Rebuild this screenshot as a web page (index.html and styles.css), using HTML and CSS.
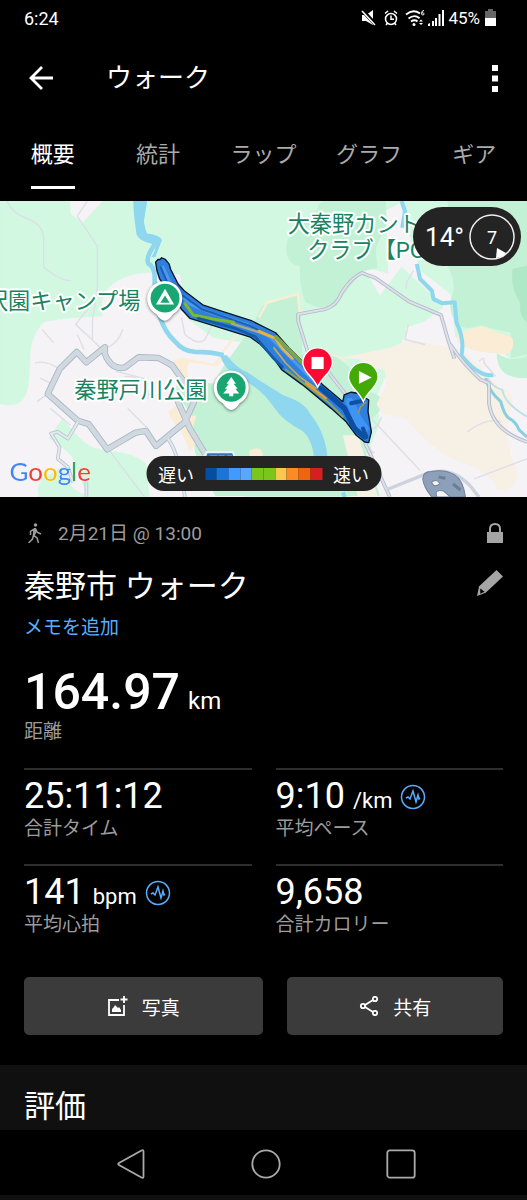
FILE: index.html
```html
<!DOCTYPE html>
<html lang="ja">
<head>
    <meta charset="UTF-8">
    <meta name="viewport" content="width=device-width, initial-scale=1.0">
    <title>ウォーク</title>
    <link rel="stylesheet" href="styles.css">
</head>
<body>
    <!-- Status bar -->
    <div class="status-bar">
        <span>6:24</span>
        <div class="status-icons">
            <svg width="16" height="18" viewBox="0 0 16 18">
                <path d="M1 6h4l7-5v15L5 12H1z" fill="#fff"/>
                <path d="M1 1l14 15" stroke="#000" stroke-width="4"/>
                <path d="M1 2l13 14" stroke="#fff" stroke-width="1.5"/>
            </svg>
            <svg class="alarm" width="16" height="18" viewBox="0 0 16 18" fill="none" stroke="#fff" stroke-width="1.5">
                <circle cx="8" cy="10" r="5.5"/>
                <path d="M8 6.500v3.800h3M2 4.500l3-2.500M14 4.500l-3-2.500M4.500 14l-1.500 2M11.500 14l1.500 2"/>
            </svg>
            <svg class="wifi" width="20" height="18" viewBox="0 0 20 18" fill="none" stroke="#fff" stroke-width="1.800">
                <path d="M1 5.500q7-6 14-1M3.500 9.500q6-4.500 11-.3M6 12.500q3.500-2.500 6.500 0"/>
                <circle cx="9" cy="15.500" r="1.500" fill="#fff" stroke="none"/>
                <path d="M19 1.500q-2.500 0-2.500 3 0 1.500 1.300 1.500T19 4.700 16.700 4" stroke-width="1"/>
                <path d="M14 12.500l2-2 2 2zM14 14l2 2 2-2z" fill="#fff" stroke="none"/>
            </svg>
            <svg width="17" height="18" viewBox="0 0 17 18" fill="#fff">
                <path d="M0 17v-2l2-1v3zM4 17v-5h2v5zM7 17V9h2v8zM10.500 17V5h2v12zM14 17V1h2v16z"/>
            </svg>
            <span>45%</span>
            <svg class="battery" width="11" height="18" viewBox="0 0 11 18">
                <path d="M0 2h3V0h5v2h3v7H0z" fill="#666"/>
                <path d="M0 9h11v8H0z" fill="#fff"/>
            </svg>
        </div>
    </div>

    <!-- App bar -->
    <header class="app-bar">
        <button class="icon-button" aria-label="戻る">
            <svg width="24" height="24" viewBox="0 0 24 24" fill="none" stroke="#fff" stroke-width="2.800">
                <path d="M24 12H2M13 1L2 12l11 11"/>
            </svg>
        </button>
        <h1>ウォーク</h1>
        <button class="icon-button" aria-label="メニュー">
            <svg width="6" height="27" viewBox="0 0 6 27" fill="#fff">
                <path d="M0 0h6v6H0zM0 10.500h6v6H0zM0 21h6v6H0z"/>
            </svg>
        </button>
    </header>

    <nav class="tabs">
        <a class="tab active" href="#">概要</a>
        <a class="tab" href="#">統計</a>
        <a class="tab" href="#">ラップ</a>
        <a class="tab" href="#">グラフ</a>
        <a class="tab" href="#">ギア</a>
    </nav>

    <!-- Map -->
    <div class="map">
        <svg class="map-canvas" viewBox="0 3 1568 881">
            <rect y="3" width="1568" height="881" fill="#d3f8e2"/>

            <!-- Built-up areas -->
            <g fill="#f5f3f5">
                <path d="M208 3h98l-60 64-35-25z"/>
                <path d="M0 607q60 15 78-30 10-20 12-110 0-60 40-103 40-12 175-18-10-35 10-75 40-50 130-55l90 5 20 130 80 60 130 20-20 80-10 60-120-15q-20 20 0 50 60 60 40 200l70 60 10 80-45 41H440q-10-90-30-125-60-30-140 15-70 0-75-90l-65 40-40 60-90-120z"/>
                <path d="M0 740q60 20 110 90l5 54H0z"/>
                <path d="M1150 30l40-20 60 200 90 70 15 130 70-10 143 110v374H1040l90-220-10-80 85-180 115-85-60-60-65-60-65 85-50-85 75 20z"/>
            </g>

            <!-- Woods -->
            <g fill="#c3f1d5">
                <path d="M965 3q-20 5-20 25l-90 90q-15 70 38 80-5 50 15 105 40 25 90 15l75-105 50-10-5-60 30-65V3z"/>
                <path d="M1332 190V3h236v457l-48 10 0-75q-70-15-90-22-50 20-75-10-25-40-10-80 15-30-15-93z"/>
                <path d="M1478 455q40 30 90 10v65q-90 5-90-75z"/>
                <path d="M782 315l100-35 13 60 5 120 100 5q80 60 70 100 70 10 70 40-10 30-35 45l-5 60-15 30 45 141H640l-60-130-10-110-50-75q10-20 5-30l110 10 35-60 60-80z"/>
                <path d="M185 650l40 45q40 50 100 50 80 10 110 40l10 99H260l-45-120q-40-40-70-55z" fill="#d3f8e2"/>
            </g>
            <path d="M1525 205l43-10v170q-25-20-20-60-30-40-23-100z" fill="#afe8c7"/>
            <path d="M1205 380l110-35 20 65 35 10-20 30-130-20z" fill="#f5f3f5"/>

            <!-- Fields -->
            <path d="M1010 470l150-30 60-22 150 25q80 70 110 110 60 25 40 60l-10 70q0 70 30 120 5 60-60 60-20-60-130-90-80-45-145-125l-65-10-20-30 30-60-5-40-60-20-15-15z" fill="#f6f0e5"/>
            <path d="M1365 395l65-20 95 35q10 60-45 45-80 0-120-35z" fill="#faecd5"/>
            <path d="M1020 700l45 0 60 184h-60z" fill="#f6f0e5"/>
            <g fill="#faecd5">
                <path d="M515 480q20-15 45-8l75 15 25-28 12 8-28 28-80-12q-20 30 5 55l-20 20z"/>
                <path d="M500 630l30-22 20 42 35-10-10 35 10 45-20 28-25-60-20-20z"/>
                <path d="M742 745q35-15 40 10l-5 20h-35z"/>
            </g>
            <path d="M660 455l60-75M770 350l25-45 92-25 5 60M890 330l12 10" fill="none" stroke="#faecd5" stroke-width="7"/>
            <path d="M955 455q50 5 75 25" fill="none" stroke="#faecd5" stroke-width="6"/>

            <!-- Water -->
            <g fill="none" stroke="#8fd7ef" stroke-linejoin="round">
                <path d="M470 120q-40 50-28 70 20 10 18 45 0 130 60 185 25 30 60 32 50 0 85 10" stroke-width="14"/>
                <path d="M1195 3l10 30-8 50M1240 190l10 45 35 35 5 25 25 12 38-3 5 60q25 50 15 100 35 40 50 45 20 15 45 12" stroke-width="12"/>
                <path d="M1445 530q10 40 45 70 10 40 25 50 20 10 30 35l23 20" stroke="#86cfe0" stroke-width="9"/>
                <path d="M1450 530q20 30 45 35 5 40 73 80" stroke="#b9dfe8" stroke-width="5"/>
                <path d="M1020 870l6 14" stroke-width="12"/>
            </g>
            <g fill="#8fd7ef">
                <path d="M396 3h42l-10 60q5 30 10 37 40 5 44 20l-20 50h-12q20-30 6-38-45-10-50-30-8-50-10-99z"/>
                <path d="M655 462h20q30 40 60 50 60 40 110 70 60 20 75 50 50 60 55 140h-40q-5-60-35-85-60-30-85-70-40-60-100-85-50-30-60-70z"/>
            </g>

            <!-- Small roads -->
            <g fill="none" stroke="#dcdfe6" stroke-width="4">
                <path d="M20 3q20 40 60 52 50 20 50 60v85q50 40 80 40M260 3l-30 45 60 90v120l-15 100 0 60M265 320l-40 50 80 75M365 385q-10 40-55 60M160 425l-35-40M250 445l-20-45M540 350l10 50q40 35 60 15l20-40"/>
                <path d="M105 485q30-10 75 20M110 600l35-25M120 530l40 20M345 510l80 20 20 50M370 525q80 0 70 65M150 620l60 50M380 620l60 60M325 745l105 139"/>
                <path d="M1230 210l-20 35-2 20M1215 370l-10 45 60 15M1100 645l150 160M1060 680q60 20 75-35M1390 690q60-45 100-30M1425 480q20-20 15 5l35 40M1410 830l158-60M1100 735l10 20M1095 750h20"/>
            </g>

            <!-- Main roads -->
            <g fill="none" stroke-linejoin="round">
                <path d="M228 452l-50 50-36 75 90 80 32 10 55 75 85-50 30-5 30 45 85-70 28-60-25-55-40-55-40-22-60-2-40 30q-40 10-60-40v-20l-55 45zM525 590l40 90 45 75" stroke="#a9b6c5" stroke-width="19"/>
                <path d="M228 452l-50 50-36 75 90 80 32 10 55 75 85-50 30-5 30 45 85-70 28-60-25-55-40-55-40-22-60-2-40 30q-40 10-60-40v-20l-55 45zM525 590l40 90 45 75" stroke="#d0d8e0" stroke-width="14"/>
                <path d="M232 660l-30 50-30-20-20 5 25 40-5 35 30 25q10 30 15 45M257 840v44M500 710q35 50 50 174" stroke="#b9c5d0" stroke-width="11"/>
                <path d="M232 660l-30 50-30-20-20 5 25 40-5 35 30 25q10 30 15 45M257 840v44M500 710q35 50 50 174" stroke="#e3e9ef" stroke-width="6"/>
                <path d="M1030 580l-55-70-60-60-28-90 0-20 80-15q35-10 50-50 30-45 60-58l40 15 100 70 95 40 20 70 20 60M1340 430q40 60 90 105l25 10v60q10 80 113 115M1085 720l75 164" stroke="#b3b9ca" stroke-width="11"/>
                <path d="M1030 580l-55-70-60-60-28-90 0-20 80-15q35-10 50-50 30-45 60-58l40 15 100 70 95 40 20 70 20 60M1340 430q40 60 90 105l25 10v60q10 80 113 115M1085 720l75 164" stroke="#dde0e8" stroke-width="6"/>
                <path d="M1150 862l125-50q70-20 125 40l25 32" stroke="#cbd3dc" stroke-width="10"/>
            </g>

            <!-- Circuit course -->
            <path d="M1258 830q0-22 25-22 40-8 70 10 25 15 32 66h-100q-25-30-27-54z" fill="#8da0b9" stroke="#70829e" stroke-width="3"/>
            <path d="M1284 840q15-12 25 4-12 10-20 4zM1300 884q-10-25 20-18l20 18z" fill="#f5f3f5" stroke="#70829e" stroke-width="3"/>
            <path d="M1305 824l20 4M1348 845l22 18" stroke="#6b7d99" stroke-width="9"/>

            <!-- Route shield -->
            <path d="M615 750h78l10 24-20 70h-60l-18-70z" fill="#3974b8" stroke="#e8f1ff" stroke-width="7"/>
            <path d="M625 764h15l-8 10M650 764h15v10M676 764h15" fill="none" stroke="#fff" stroke-width="6"/>

            <!-- Recorded track -->
            <path d="M463 185l7-8 6 0 5-5 11 5 11 13 5 17 22 43 18 20 57 43 45 15 100 32 70 35 40 45 45 45 55 65 60 50 4-20 21-8 20 3 32 20-2 35 10 60-8 32-12-2-25-20-30-40-45-40-85-70-62-45-28-40-35-35-30-22-105-33-75-23-25-27-65-90-8-25z" fill="#2f7fdc" stroke="#07152a" stroke-width="4" stroke-linejoin="round"/>
            <g fill="none" stroke-linecap="round" stroke-linejoin="round">
                <path d="M485 200l30 65 50 45 60 25 110 35 70 40 60 60 80 80 90 80 50 70" stroke="#4c99ee" stroke-width="9"/>
                <path d="M478 200l17 40M545 285l55 40 140 48 80 40" stroke="#1c5fb4" stroke-width="6"/>
                <path d="M550 308l25 34 60 12 60 10" stroke="#7fb82d" stroke-width="9"/>
                <path d="M590 352l110 30 60 25 50 60 30 30" stroke="#125aa6" stroke-width="8"/>
                <path d="M690 368l70 22 50 17" stroke="#a9a987" stroke-width="7"/>
                <path d="M770 390l50 22 20 30 30 30" stroke="#edb43c" stroke-width="8"/>
                <path d="M822 408l40 40 40 40" stroke="#79a64f" stroke-width="12"/>
                <path d="M815 440l35 45 40 40 50 35" stroke="#c4a760" stroke-width="5"/>
                <path d="M850 505l60 45 70 55 40 40" stroke="#8aa54f" stroke-width="6"/>
                <path d="M910 545l60 45" stroke="#ef9d34" stroke-width="6"/>
                <path d="M955 560l70 60 30 60 30 25" stroke="#0c4fa2" stroke-width="16"/>
                <path d="M1040 600l25 50 20 30" stroke="#3d94f3" stroke-width="24"/>
                <path d="M1045 605l35-8M1080 680l10 25" stroke="#0f4fa4" stroke-width="12"/>
                <path d="M1067 632l5-15 16-15" stroke="#a9914c" stroke-width="5"/>
            </g>

            <!-- Place names -->
            <g class="place-label">
                <text x="-42" y="325">沢園キャンプ場</text>
                <text x="221" y="589">秦野戸川公園</text>
                <text x="856" y="94">大秦野カント</text>
                <text x="914" y="172">クラブ【PG</text>
            </g>
            <text class="google" x="28" y="837"><tspan fill="#4285f4">G</tspan><tspan fill="#ea4335">o</tspan><tspan fill="#fbbc05">o</tspan><tspan fill="#4285f4">g</tspan><tspan fill="#34a853">l</tspan><tspan fill="#ea4335">e</tspan></text>

            <!-- Place pins -->
            <g class="pin-shadow">
                <path d="M490 359q-12 0-25-20a52 52 0 1 1 50 0q-13 20-25 20z" fill="#fff"/>
                <circle cx="491" cy="292" r="43" fill="#18a673"/>
                <path d="M491 264l-27 47h54zM491 284l14 22h-28z" fill="#fff" fill-rule="evenodd"/>
                <path d="M688 625q-12 0-25-20a52 52 0 1 1 50 0q-13 20-25 20z" fill="#fff"/>
                <circle cx="688" cy="557" r="43" fill="#18a673"/>
                <path d="M688 527l-14 20h7l-12 15h7l-12 14h18v8h12v-8h18l-12-14h7l-12-15h7z" fill="#fff"/>
            </g>

            <!-- Start and stop pins -->
            <path d="M945 557q-8-18-28-39-16-20-16-34a44 44 0 0 1 88 0q0 14-16 34-20 21-28 39z" fill="#fa0b34" stroke="#fff" stroke-width="4"/>
            <path d="M927 467h36v36h-36z" fill="#fff"/>
            <path d="M1081 600q-8-18-28-39-16-20-16-34a44 44 0 0 1 88 0q0 14-16 34-20 21-28 39z" fill="#43aa05" stroke="#fff" stroke-width="4"/>
            <path d="M1068 509v38l38-19z" fill="#fff"/>
        </svg>

        <div class="weather">
            <span>14°</span>
            <svg width="46" height="46" viewBox="0 0 46 46">
                <circle cx="23" cy="23" r="22" fill="none" stroke="#eee" stroke-width="1.500"/>
                <path d="M28 34l9 5q-3 4-10 5z" fill="#fff"/>
                <text class="wind" x="23" y="30" text-anchor="middle">7</text>
            </svg>
        </div>

        <div class="legend">
            <span>遅い</span>
            <div class="scale">
                <i class="c1"></i><i class="c2"></i><i class="c3"></i><i class="c4"></i><i class="c5"></i><i class="c5"></i><i class="c6"></i><i class="c7"></i><i class="c8"></i><i class="c9"></i>
            </div>
            <span>速い</span>
        </div>
    </div>

    <!-- Activity summary -->
    <main class="summary">
        <div class="row date-row">
            <svg width="14" height="20" viewBox="0 0 14 20" fill="none" stroke="#9c9c9c" stroke-width="1.500">
                <circle cx="7.500" cy="2" r="1.800" fill="#9c9c9c" stroke="none"/>
                <path d="M6.500 5.500L5.500 12l3.500 3 1.500 5M5.500 12l-1 4-4 4M6 6L2.500 8.500V12M7.500 6l2 3.500 3.500 1.500"/>
                <path d="M6 5h2l1 3-2 4-2 .5z" fill="#9c9c9c" stroke="none"/>
            </svg>
            <span class="date">2月21日 @ 13:00</span>
            <svg class="lock" width="16" height="20" viewBox="0 0 16 20">
                <path d="M3 10V6q0-5 5-5t5 5v4" fill="none" stroke="#a5a5a5" stroke-width="2"/>
                <path d="M0 9h16v11H0z" fill="#a5a5a5"/>
            </svg>
        </div>
        <div class="row title-row">
            <h2>秦野市 ウォーク</h2>
            <button class="icon-button" aria-label="名前を編集">
                <svg width="26" height="26" viewBox="0 0 24 24">
                    <path d="M18 0l6 6L8 21l-8 3 2-9z" fill="#a5a5a5"/>
                    <path d="M3 17l4 3-4 2z" fill="#000"/>
                </svg>
            </button>
        </div>
        <a class="memo" href="#">メモを追加</a>

        <div class="distance">
            <div class="value"><strong>164.97</strong> <span class="unit">km</span></div>
            <div class="label">距離</div>
        </div>

        <div class="stats">
            <div class="stat">
                <div class="value">25:11:12</div>
                <div class="label">合計タイム</div>
            </div>
            <div class="stat">
                <div class="value">9:10 <span class="unit">/km</span>
                    <svg class="pulse" width="26" height="26" viewBox="0 0 26 26">
                        <circle cx="13" cy="13" r="11.500"/>
                        <path d="M6 14l2-1 2 2 3-8 3 11 2-7 1 4 1-1"/>
                    </svg>
                </div>
                <div class="label">平均ペース</div>
            </div>
            <div class="stat">
                <div class="value">141 <span class="unit">bpm</span>
                    <svg class="pulse" width="26" height="26" viewBox="0 0 26 26">
                        <circle cx="13" cy="13" r="11.500"/>
                        <path d="M6 14l2-1 2 2 3-8 3 11 2-7 1 4 1-1"/>
                    </svg>
                </div>
                <div class="label">平均心拍</div>
            </div>
            <div class="stat">
                <div class="value">9,658</div>
                <div class="label">合計カロリー</div>
            </div>
        </div>

        <div class="actions">
            <button class="action">
                <svg width="20" height="20" viewBox="0 0 20 20" fill="none" stroke="#fff" stroke-width="1.800">
                    <path d="M11 4H1v15h15V9M16 0v7M12.500 3.500h7"/>
                    <path d="M4 16v-3l2-2 1-2 3 3 1-1 2 3v2z" fill="#fff" stroke="none"/>
                </svg>
                写真
            </button>
            <button class="action">
                <svg width="20" height="20" viewBox="0 0 20 20" fill="none" stroke="#fff" stroke-width="1.800">
                    <circle cx="4" cy="10" r="2.200"/>
                    <circle cx="16" cy="3" r="2.200"/>
                    <circle cx="16" cy="17" r="2.200"/>
                    <path d="M6 9l8-5M6 11l8 5"/>
                </svg>
                共有
            </button>
        </div>
    </main>

    <section class="rating">
        <h2>評価</h2>
    </section>

    <!-- System navigation -->
    <nav class="system-nav">
        <button class="icon-button" aria-label="戻る">
            <svg width="30" height="30" viewBox="0 0 30 30"><path d="M25.500 1.500q2-1 2 1v25q0 2-2 1L3 16q-1.500-1 0-2z"/></svg>
        </button>
        <button class="icon-button" aria-label="ホーム">
            <svg width="30" height="30" viewBox="0 0 30 30"><circle cx="15" cy="15" r="13.700"/></svg>
        </button>
        <button class="icon-button" aria-label="履歴">
            <svg width="30" height="30" viewBox="0 0 30 30"><rect x="1.300" y="1.300" width="27.400" height="27.400" rx="2.500"/></svg>
        </button>
    </nav>
</body>
</html>
```

FILE: styles.css
```css
* {
    box-sizing: border-box;
}

body {
    margin: 0;
    background: #000;
    color: #fff;
    font-family: Roboto, "Noto Sans CJK JP", sans-serif;
    font-size: 19px;
}

h1, h2 {
    margin: 0;
    font-weight: 400;
}

a {
    text-decoration: none;
}

svg {
    display: block;
    flex-shrink: 0;
}

.icon-button {
    display: flex;
    padding: 0;
    border: 0;
    background: none;
}

.status-bar {
    display: flex;
    align-items: center;
    justify-content: space-between;
    height: 36px;
    padding: 0 31px 0 24px;
    font-size: 18px;
}

.status-icons {
    display: flex;
    align-items: center;
    gap: 3px;
    font-size: 17px;
}

.alarm,
.wifi {
    margin-left: 3px;
}

.battery {
    margin-left: 2px;
}

.app-bar {
    display: flex;
    align-items: center;
    height: 84px;
    padding: 0 29px;
}

.app-bar h1 {
    flex: 1;
    margin-left: 53px;
    font-size: 26px;
    line-height: 32px;
}

.tabs {
    display: grid;
    grid-template-columns: repeat(5, 1fr);
    justify-items: center;
    height: 81px;
    padding-bottom: 12px;
}

.tab {
    padding-top: 18px;
    color: #aaa;
    font-size: 22px;
    line-height: 34px;
}

.tab.active {
    border-bottom: 3px solid #fff;
    color: #fff;
}

.map {
    position: relative;
    overflow: hidden;
}

.map-canvas {
    width: 100%;
}

/* Sizes inside the map are in its own drawing units */
.place-label {
    fill: #178461;
    stroke: #fff;
    stroke-width: 12px;
    stroke-linejoin: round;
    paint-order: stroke;
    font-size: 66px;
}

.google {
    filter: drop-shadow(0 0 2px #fff) drop-shadow(0 0 2px #fff);
    font-family: Lato, sans-serif;
    font-size: 77px;
}

.pin-shadow {
    filter: drop-shadow(0 3px 5px rgba(0, 0, 0, 0.5));
}

.weather {
    position: absolute;
    top: 6px;
    right: 6px;
    display: flex;
    align-items: center;
    gap: 5px;
    height: 59px;
    padding: 0 6px 0 12px;
    border-radius: 30px;
    background: #242424;
    font-size: 26px;
}

.wind {
    fill: #fff;
    font-size: 18px;
}

.legend {
    position: absolute;
    bottom: 6px;
    left: 50%;
    display: flex;
    align-items: center;
    gap: 11px;
    height: 35px;
    padding: 0 12px;
    border-radius: 18px;
    background: #242424;
    font-size: 18px;
    white-space: nowrap;
    transform: translateX(-50%);
}

.scale {
    display: flex;
    width: 117px;
    height: 12px;
}

.scale i {
    flex: 1;
}

.c1 { background: #034da2; }
.c2 { background: #1976d8; }
.c3 { background: #409aff; }
.c4 { background: #5aa7ff; }
.c5 { background: #7ac61c; }
.c6 { background: #fac84f; }
.c7 { background: #fb8b27; }
.c8 { background: #ed650c; }
.c9 { background: #d5201f; }

.summary {
    padding: 21px 24px 30px;
}

.row {
    display: flex;
    align-items: center;
}

.date-row {
    height: 30px;
    padding-left: 4px;
    color: #9c9c9c;
}

.date {
    flex: 1;
    padding-bottom: 4px;
    margin-left: 16px;
}

.title-row {
    justify-content: space-between;
    height: 70px;
}

.title-row h2,
.rating h2 {
    font-size: 31px;
}

.memo {
    display: block;
    margin-top: -2px;
    color: #58adff;
    line-height: 24px;
}

.value {
    display: flex;
    align-items: baseline;
    gap: 8px;
}

.distance .value {
    margin-top: 24px;
    font-size: 50px;
    line-height: 56px;
}

.distance strong {
    font-weight: 500;
}

.value .unit {
    font-size: 22px;
    line-height: 24px;
}

.distance .unit {
    font-size: 24px;
}

.label {
    color: #9c9c9c;
    line-height: 24px;
}

.stats {
    display: grid;
    grid-template-columns: 1fr 1fr;
    column-gap: 24px;
    margin-top: 24px;
}

.stat {
    height: 96px;
    padding-top: 6px;
    border-top: 2px solid #2e2e2e;
}

.stat .value {
    font-size: 36px;
    line-height: 41px;
}

.pulse {
    align-self: center;
    fill: none;
    stroke: #58adff;
    stroke-width: 1.5px;
}

.actions {
    display: grid;
    grid-template-columns: 10fr 9fr;
    gap: 24px;
    margin-top: 17px;
}

.action {
    display: flex;
    align-items: center;
    justify-content: center;
    gap: 14px;
    height: 58px;
    border: 0;
    border-radius: 5px;
    background: #3b3b3b;
    color: #fff;
    font-family: inherit;
    font-size: 19px;
}

.rating {
    height: 65px;
    padding: 20px 24px 0;
    background: #101010;
}

.rating h2 {
    line-height: 44px;
}

.system-nav {
    display: grid;
    grid-template-columns: repeat(3, 1fr);
    place-items: center;
    height: 70px;
    padding: 3px 11% 0 12%;
    border-bottom: 5px solid #101010;
}

.system-nav svg {
    fill: none;
    stroke: #aaa;
    stroke-width: 1.8px;
}
```
